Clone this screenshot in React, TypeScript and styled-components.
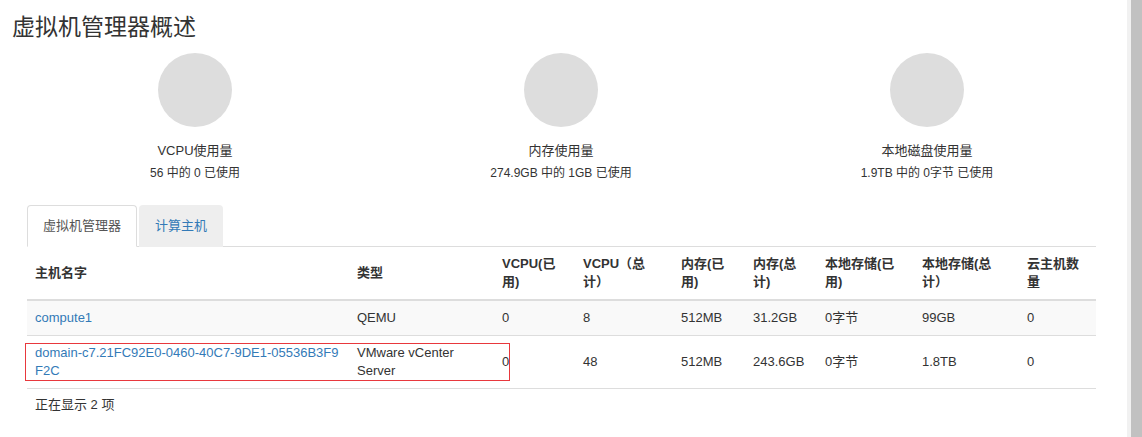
import styled, { createGlobalStyle } from "styled-components";

const GlobalStyle = createGlobalStyle`
  html, body {
    margin: 0;
    padding: 0;
    background: #fff;
  }
  body {
    font-family: "Liberation Sans", "Noto Sans CJK SC", sans-serif;
    font-size: 13px;
    line-height: 1.42857;
    color: #333;
  }
`;

const charts = [
  { title: "VCPU使用量", detail: "56 中的 0 已使用" },
  { title: "内存使用量", detail: "274.9GB 中的 1GB 已使用" },
  { title: "本地磁盘使用量", detail: "1.9TB 中的 0字节 已使用" },
];

const columns = [
  { label: "主机名字", width: 322 },
  { label: "类型", width: 145 },
  { label: "VCPU(已\n用)", width: 81 },
  { label: "VCPU（总\n计）", width: 98 },
  { label: "内存(已\n用)", width: 72 },
  { label: "内存(总\n计)", width: 72 },
  { label: "本地存储(已\n用)", width: 97 },
  { label: "本地存储(总\n计）", width: 105 },
  { label: "云主机数\n量", width: 77 },
];

const hosts = [
  {
    name: "compute1",
    type: "QEMU",
    values: ["0", "8", "512MB", "31.2GB", "0字节", "99GB", "0"],
  },
  {
    name: "domain-c7.21FC92E0-0460-40C7-9DE1-05536B3F9F2C",
    type: "VMware vCenter Server",
    values: ["0", "48", "512MB", "243.6GB", "0字节", "1.8TB", "0"],
    marked: true,
  },
];

const App = () => (
  <Shell>
    <GlobalStyle />
    <Main>
      <Title>虚拟机管理器概述</Title>
      <Charts>
        {charts.map((c) => (
          <Chart key={c.title}>
            <Pie />
            <ChartTitle>{c.title}</ChartTitle>
            <ChartDetail>{c.detail}</ChartDetail>
          </Chart>
        ))}
      </Charts>
      <Section>
        <Tabs>
          <Tab $active>虚拟机管理器</Tab>
          <Tab>计算主机</Tab>
        </Tabs>
        <Table>
          <colgroup>
            {columns.map((c) => (
              <Col key={c.label} $w={c.width} />
            ))}
          </colgroup>
          <thead>
            <tr>
              {columns.map((c) => (
                <Th key={c.label}>{c.label}</Th>
              ))}
            </tr>
          </thead>
          <tbody>
            {hosts.map((h, i) => (
              <Row key={h.name} $striped={i % 2 === 0}>
                <NameCell>
                  <HostLink>{h.name}</HostLink>
                  {h.marked && <Highlight />}
                </NameCell>
                <Td>{h.type}</Td>
                {h.values.map((v, j) => (
                  <Td key={j}>{v}</Td>
                ))}
              </Row>
            ))}
          </tbody>
        </Table>
        <Summary>正在显示 2 项</Summary>
      </Section>
    </Main>
    <ScrollTrack>
      <ScrollThumb />
    </ScrollTrack>
  </Shell>
);

export default App;

const Shell = styled.div`
  display: flex;
  height: 437px;
  overflow: hidden;
`;

const Main = styled.main`
  flex: 1;
  min-width: 0;
`;

const Title = styled.h1`
  margin: 14px 0 0 12px;
  font-size: 23px;
  font-weight: 400;
  line-height: 26px;
  color: #333;
`;

const Charts = styled.div`
  display: grid;
  grid-template-columns: repeat(3, 1fr);
  width: 1098px;
  margin: 13px 0 0 12px;
`;

const Chart = styled.div`
  display: flex;
  flex-direction: column;
  align-items: center;
`;

const Pie = styled.div`
  width: 74px;
  height: 74px;
  border-radius: 50%;
  background: #ddd;
`;

const ChartTitle = styled.div`
  margin-top: 15px;
  font-size: 13px;
`;

const ChartDetail = styled.div`
  margin-top: 4px;
  font-size: 12px;
`;

const Section = styled.section`
  margin: 23px 31px 0 27px;
`;

const Tabs = styled.ul`
  display: flex;
  margin: 0;
  padding: 0;
  list-style: none;
  border-bottom: 1px solid #ddd;
`;

const Tab = styled.li<{ $active?: boolean }>`
  margin: 0 2px -1px 0;
  padding: 10px 15px;
  line-height: 20px;
  border: 1px solid ${(p) => (p.$active ? "#ddd" : "transparent")};
  border-bottom-color: transparent;
  border-radius: 4px 4px 0 0;
  background: ${(p) => (p.$active ? "#fff" : "#eee")};
  color: ${(p) => (p.$active ? "#555" : "#337ab7")};
`;

const Table = styled.table`
  width: 100%;
  table-layout: fixed;
  border-collapse: collapse;
  border-bottom: 1px solid #ddd;
`;

const Col = styled.col<{ $w: number }>`
  width: ${(p) => p.$w}px;
`;

const Th = styled.th`
  padding: 8px;
  text-align: left;
  vertical-align: middle;
  font-weight: 700;
  line-height: 18px;
  white-space: pre-line;
  border-bottom: 2px solid #ddd;
`;

const Row = styled.tr<{ $striped: boolean }>`
  background: ${(p) => (p.$striped ? "#f9f9f9" : "#fff")};
`;

const Td = styled.td`
  padding: 8px;
  line-height: 18px;
  vertical-align: middle;
  border-top: 1px solid #ddd;
`;

const NameCell = styled(Td)`
  position: relative;
  word-break: break-all;
`;

const HostLink = styled.a`
  color: #337ab7;
  text-decoration: none;
`;

const Highlight = styled.span`
  position: absolute;
  top: 7px;
  left: -2px;
  width: 485px;
  height: 38px;
  box-sizing: border-box;
  border: 1px solid #e8383d;
  pointer-events: none;
`;

const Summary = styled.div`
  margin-top: 7px;
  padding: 0 8px;
`;

const ScrollTrack = styled.div`
  width: 15px;
  background: #f1f1f1;
  display: flex;
  justify-content: flex-end;
`;

const ScrollThumb = styled.div`
  width: 11px;
  background: #c1c1c1;
`;
